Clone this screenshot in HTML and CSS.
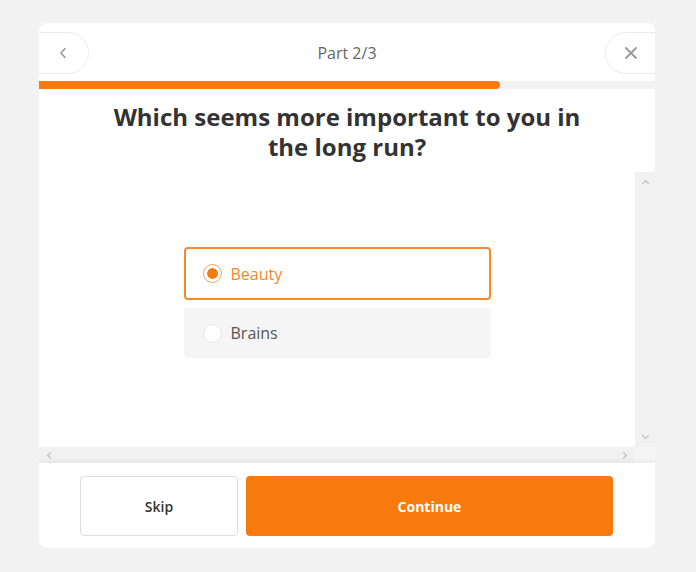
FILE: index.html
```html
<!DOCTYPE html>
<html lang="en">
<head>
    <meta charset="UTF-8">
    <meta name="viewport" content="width=device-width, initial-scale=1.0">
    <title>Quiz</title>
    <link rel="stylesheet" href="styles.css">
</head>
<body>
    <div class="card">
        <div class="header">
            <button class="nav-btn back" aria-label="Back">
                <svg width="10" height="12" viewBox="0 0 10 12"><path d="M7 1.5 L3 6 L7 10.5" fill="none" stroke="#999" stroke-width="1.6" stroke-linecap="round" stroke-linejoin="round"/></svg>
            </button>
            <div class="part">Part 2/3</div>
            <button class="nav-btn close" aria-label="Close">
                <svg width="14" height="14" viewBox="0 0 14 14"><path d="M2 2 L12 12 M12 2 L2 12" fill="none" stroke="#999" stroke-width="1.8" stroke-linecap="round"/></svg>
            </button>
        </div>
        <div class="progress"><div class="progress-fill"></div></div>
        <h1 class="question">Which seems more important to you in the long run?</h1>
        <div class="scroller">
            <div class="content">
                <div class="options">
                    <label class="option selected">
                        <span class="radio"></span>
                        <span>Beauty</span>
                    </label>
                    <label class="option">
                        <span class="radio"></span>
                        <span>Brains</span>
                    </label>
                </div>
            </div>
            <div class="vbar">
                <span class="arrow up"></span>
                <span class="arrow down"></span>
            </div>
            <div class="hbar">
                <span class="arrow left"></span>
                <span class="arrow right"></span>
            </div>
            <div class="corner"></div>
        </div>
        <div class="footer">
            <button class="btn skip">Skip</button>
            <button class="btn continue">Continue</button>
        </div>
    </div>
</body>
</html>
```

FILE: styles.css
```css
body {
    margin: 0;
    background: #f2f2f2;
    font-family: "Open Sans", Arial, sans-serif;
    padding-top: 23px;
}

.card {
    width: 616px;
    height: 525px;
    margin-left: 39px;
    background: #fff;
    border-radius: 8px;
    overflow: hidden;
    display: flex;
    flex-direction: column;
}

.header {
    height: 58px;
    display: flex;
    align-items: center;
    justify-content: space-between;
    padding-top: 1px;
    box-sizing: border-box;
}

.nav-btn {
    width: 50px;
    height: 42px;
    background: #fff;
    border: 1px solid #ececec;
    display: flex;
    align-items: center;
    justify-content: center;
    padding: 0;
    cursor: pointer;
}

.nav-btn.back {
    border-left: none;
    border-radius: 0 21px 21px 0;
    padding-right: 2px;
}

.nav-btn.close {
    border-right: none;
    border-radius: 21px 0 0 21px;
    padding-left: 2px;
}

.part {
    font-size: 16px;
    color: #666;
}

.progress {
    height: 8px;
    background: #f2f2f2;
}

.progress-fill {
    width: 461px;
    height: 100%;
    background: #f97a0c;
    border-radius: 0 4px 4px 0;
}

.question {
    margin: 0;
    height: 83px;
    padding: 13px 60px 0;
    box-sizing: border-box;
    text-align: center;
    font-size: 24px;
    line-height: 30px;
    font-weight: 700;
    color: #333;
}

.scroller {
    flex: 1;
    display: grid;
    grid-template-columns: 1fr 20px;
    grid-template-rows: 1fr 16px;
}

.content {
    padding-top: 75px;
}

.options {
    width: 307px;
    margin: 0 auto;
    display: flex;
    flex-direction: column;
    gap: 8px;
}

.option {
    height: 50px;
    display: flex;
    align-items: center;
    gap: 9px;
    padding-left: 19px;
    background: #f5f5f5;
    border-radius: 4px;
    font-size: 16px;
    color: #555;
    box-sizing: border-box;
}

.option.selected {
    height: 53px;
    background: #fff;
    border: 2px solid #f28a2e;
    padding-left: 17px;
    color: #ef8a2c;
}

.radio {
    width: 19px;
    height: 19px;
    border-radius: 50%;
    background: #fff;
    border: 1px solid #e6e6e6;
    box-sizing: border-box;
}

.option.selected .radio {
    border: 1px solid #f2a266;
    background: radial-gradient(circle, #f97a0c 0 5px, #fff 5.5px);
}

.vbar {
    background: #f1f1f1;
    display: flex;
    flex-direction: column;
    justify-content: space-between;
    align-items: center;
    padding: 6px 0;
}

.hbar {
    background: #f1f1f1;
    display: flex;
    justify-content: space-between;
    align-items: center;
    padding: 0 6px;
}

.corner {
    background: #f5f5f5;
}

.arrow {
    width: 4px;
    height: 4px;
    border-top: 1.3px solid #b5b5b5;
    border-left: 1.3px solid #b5b5b5;
}

.arrow.up { transform: rotate(45deg); margin-top: 3px; }
.arrow.down { transform: rotate(225deg); margin-bottom: 3px; }
.arrow.left { transform: rotate(-45deg); margin-left: 3px; }
.arrow.right { transform: rotate(135deg); margin-right: 3px; }

.footer {
    height: 85px;
    display: flex;
    gap: 8px;
    padding: 13px 42px 12px 41px;
    box-sizing: border-box;
    box-shadow: 0 -2px 4px rgba(0, 0, 0, 0.05);
    position: relative;
}

.btn {
    height: 60px;
    border-radius: 4px;
    font-family: "Open Sans", Arial, sans-serif;
    font-size: 14px;
    font-weight: 600;
    cursor: pointer;
}

.btn.skip {
    width: 158px;
    background: #fff;
    border: 1px solid #ddd;
    color: #333;
}

.btn.continue {
    flex: 1;
    background: #f97a0c;
    border: none;
    color: #fff;
    font-weight: 700;
}
```
